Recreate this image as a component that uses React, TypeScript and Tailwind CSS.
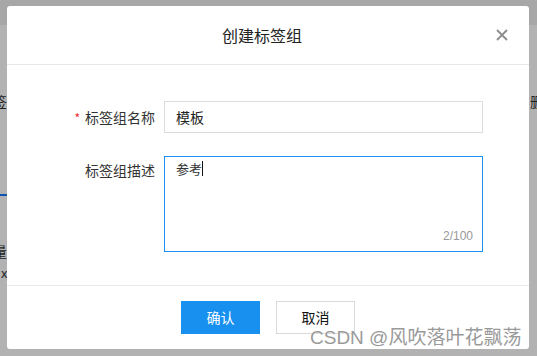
import React from "react";

const cjk = { fontFamily: '"Noto Sans CJK SC", "Noto Sans", sans-serif' };

export default function App() {
  return (
    <div className="relative w-[537px] h-[356px] overflow-hidden bg-white" style={cjk}>
      {/* underlying page */}
      <div className="absolute inset-0 flex flex-col">
        <div className="h-[25px] bg-[#f0f0f0]" />
        <div className="relative flex-1">
          <span className="absolute left-[-7px] top-[66px] text-[14px] text-[#333]">签</span>
          <span className="absolute right-[-7px] top-[66px] text-[14px] text-[#333]">删</span>
          <div className="absolute left-0 top-[169px] w-[10px] h-[2px] bg-[#1677ff]" />
          <span className="absolute left-[-7px] top-[216px] text-[14px] text-[#333]">量</span>
          <span className="absolute left-[1px] top-[238px] text-[13px] text-[#333]">x</span>
        </div>
      </div>
      {/* overlay */}
      <div className="absolute inset-0 bg-black/30" />

      {/* modal */}
      <div className="absolute left-[7px] top-[6px] w-[522px] h-[343px] bg-white rounded-[3px] flex flex-col">
        <div className="relative h-[59px] border-b border-[#e8e8e8] flex items-center justify-center pr-[12px]">
          <span className="text-[16px] text-[#222]">创建标签组</span>
          <svg
            className="absolute right-[21px] top-[23px]"
            width="12"
            height="12"
            viewBox="0 0 12 12"
            fill="none"
            stroke="#8c8c8c"
            strokeWidth="1.8"
          >
            <path d="M1 1L11 11M11 1L1 11" />
          </svg>
        </div>

        <div className="flex-1 flex flex-col gap-[23px] pt-[36px]">
          <div className="flex items-center">
            <div className="w-[148px] flex justify-end items-center text-[14px] text-[#333]">
              <span className="text-[#f5222d] text-[12px] mr-[5px] mt-[2px]">*</span>
              标签组名称
            </div>
            <div className="ml-[9px] w-[319px] h-[32px] border border-[#dcdcdc] flex items-center pl-[11px] text-[14px] text-[#222]">
              模板
            </div>
          </div>
          <div className="flex items-start">
            <div className="w-[148px] h-[28px] flex justify-end items-center text-[14px] text-[#333]">
              标签组描述
            </div>
            <div className="relative ml-[9px] w-[319px] h-[96px] border border-[#1e8ef0] pl-[11px] pt-[1px] text-[13px] text-[#333] leading-[22px]">
              <span>参考</span>
              <span className="inline-block w-[1px] h-[15px] bg-[#111] align-[-2px]" />
              <span
                className="absolute right-[9px] bottom-[9px] text-[12px] text-[#999] leading-none"
                style={{ fontFamily: '"Liberation Sans", Arial, sans-serif' }}
              >
                2/100
              </span>
            </div>
          </div>
        </div>

        <div className="h-[64px] border-t border-[#eaeaea] flex justify-center gap-[16px] pt-[15px]">
          <div className="w-[79px] h-[33px] bg-[#1890f0] text-white text-[14px] flex items-center justify-center">
            确认
          </div>
          <div className="w-[79px] h-[33px] border border-[#d9d9d9] bg-white text-[#111] text-[14px] flex items-center justify-center">
            取消
          </div>
        </div>
      </div>

      {/* watermark */}
      <div
        className="absolute left-[310px] top-[328px] text-[19px] text-[#9a9a9a] leading-none whitespace-nowrap"
        style={{
          fontFamily: '"Liberation Sans", "Noto Sans CJK SC", sans-serif',
          textShadow: "0 0 2px #fff, 0 0 1px #fff",
        }}
      >
        CSDN @风吹落叶花飘荡
      </div>
    </div>
  );
}
